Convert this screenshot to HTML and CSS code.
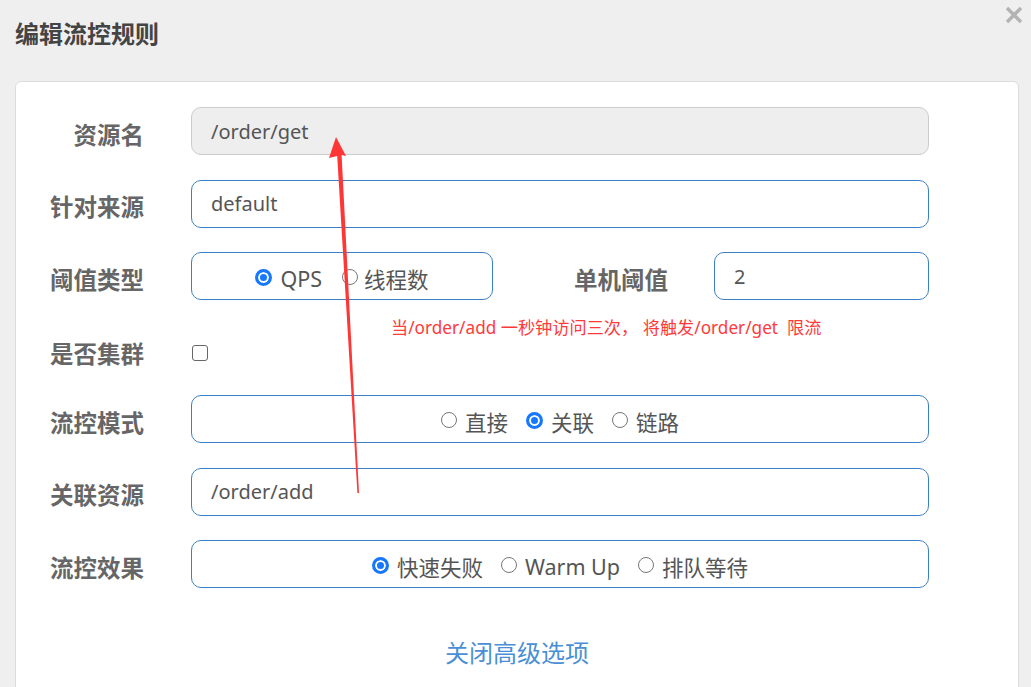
FILE: index.html
```html
<!DOCTYPE html>
<html lang="zh">
<head>
<meta charset="utf-8">
<title>编辑流控规则</title>
<link rel="stylesheet" href="styles.css">
</head>
<body>
<div class="dialog">
  <div class="header">
    <h3 class="title">编辑流控规则</h3>
    <span class="close">
      <svg width="18" height="18" viewBox="0 0 18 18"><path d="M2 2L16 16M16 2L2 16" stroke="#b3b3b3" stroke-width="3.4" stroke-linecap="butt"/></svg>
    </span>
  </div>
  <div class="card">
    <div class="row">
      <label class="label">资源名</label>
      <div class="field disabled">/order/get</div>
    </div>
    <div class="row">
      <label class="label">针对来源</label>
      <div class="field">default</div>
    </div>
    <div class="row">
      <label class="label">阈值类型</label>
      <div class="field box small">
        <span class="opt"><span class="radio on"></span>QPS</span>
        <span class="opt tight"><span class="radio"></span>线程数</span>
      </div>
      <label class="label mid">单机阈值</label>
      <div class="field">2</div>
    </div>
    <div class="row cluster">
      <label class="label">是否集群</label>
      <span class="checkbox"></span>
    </div>
    <div class="row">
      <label class="label">流控模式</label>
      <div class="field box">
        <span class="opt"><span class="radio"></span>直接</span>
        <span class="opt"><span class="radio on"></span>关联</span>
        <span class="opt"><span class="radio"></span>链路</span>
      </div>
    </div>
    <div class="row">
      <label class="label">关联资源</label>
      <div class="field">/order/add</div>
    </div>
    <div class="row">
      <label class="label">流控效果</label>
      <div class="field box">
        <span class="opt"><span class="radio on"></span>快速失败</span>
        <span class="opt"><span class="radio"></span>Warm Up</span>
        <span class="opt"><span class="radio"></span>排队等待</span>
      </div>
    </div>
    <div class="more"><a class="link">关闭高级选项</a></div>
  </div>
  <div class="note">当/order/add 一秒钟访问三次， 将触发/order/get&nbsp; 限流</div>
  <svg class="arrow" width="1031" height="687" viewBox="0 0 1031 687">
    <polygon points="336,137 346,156 341.6,155 359,493 357.4,493 337.2,156 329,158" fill="#ff3636"/>
  </svg>
</div>
</body>
</html>
```
FILE: styles.css
```css
html, body {
  margin: 0;
  padding: 0;
  background: #efefef;
  overflow: hidden;
  height: 100%;
}
body {
  font-family: "Noto Sans", "Noto Sans CJK SC", sans-serif;
  color: #555;
}
.dialog {
  position: relative;
  width: 1031px;
  height: 687px;
}
.header {
  display: flex;
  justify-content: space-between;
  padding: 0 8px 0 15px;
  height: 81px;
}
.title {
  margin: 16px 0 0;
  font-family: "Noto Sans CJK SC", sans-serif;
  font-size: 24px;
  line-height: 34px;
  font-weight: 700;
  color: #444;
}
.close {
  margin-top: 6px;
  width: 18px;
  height: 18px;
}
.card {
  margin-left: 15px;
  width: 1004px;
  height: 640px;
  background: #fff;
  border: 1px solid #dcdcdc;
  border-radius: 6px;
  padding: 25px 89px 0 0;
  box-sizing: border-box;
  display: flex;
  flex-direction: column;
  gap: 24.5px;
}
.row {
  display: flex;
  align-items: center;
  height: 48px;
}
.label {
  width: 128px;
  margin-right: 47px;
  flex: none;
  text-align: right;
  font-family: "Noto Sans CJK SC", sans-serif;
  font-weight: 700;
  font-size: 23.5px;
  color: #666;
  padding-top: 5px;
}
.label.mid {
  width: 175px;
  margin-right: 46px;
}
.field {
  flex: 1;
  height: 48px;
  box-sizing: border-box;
  border: 1px solid #3d7fc4;
  border-radius: 10px;
  padding: 0 19px;
  display: flex;
  align-items: center;
  font-size: 20px;
  color: #555;
}
.field.disabled {
  background: #eee;
  border-color: #ccc;
}
.field.box {
  justify-content: center;
  padding: 5px 0 0;
  gap: 18px;
}
.field.small {
  flex: none;
  width: 302px;
  gap: 20px;
}
.opt {
  display: inline-flex;
  align-items: center;
  font-family: "Noto Sans", "Noto Sans CJK SC", sans-serif;
  font-size: 21.5px;
  color: #555;
  white-space: nowrap;
}
.opt.tight .radio { margin-right: 6px; }
.radio {
  width: 16px;
  height: 16px;
  box-sizing: border-box;
  border: 1.5px solid #777;
  border-radius: 50%;
  margin-right: 8px;
  margin-top: -3px;
  background: #fff;
}
.radio.on {
  width: 17px;
  height: 17px;
  border: 3px solid #1677ff;
  background: #1677ff;
  box-shadow: inset 0 0 0 2px #fff;
}
.row.cluster {
  height: 46px;
  align-items: flex-end;
}
.row.cluster .label {
  line-height: 36px;
  padding-top: 0;
}
.checkbox {
  width: 16px;
  height: 16px;
  box-sizing: border-box;
  border: 1.5px solid #666;
  border-radius: 3px;
  margin: 0 0 10px 1px;
}
.more {
  text-align: center;
  padding-left: 89px;
  margin-top: 21px;
}
.link {
  font-family: "Noto Sans CJK SC", sans-serif;
  font-size: 24px;
  color: #4a8fd5;
  cursor: pointer;
}
.note {
  position: absolute;
  left: 391px;
  top: 314px;
  font-family: "Noto Sans", "Noto Sans CJK SC", sans-serif;
  font-size: 17.2px;
  color: #ff3a3a;
  white-space: nowrap;
}
.arrow {
  position: absolute;
  left: 0;
  top: 0;
  pointer-events: none;
}
```
